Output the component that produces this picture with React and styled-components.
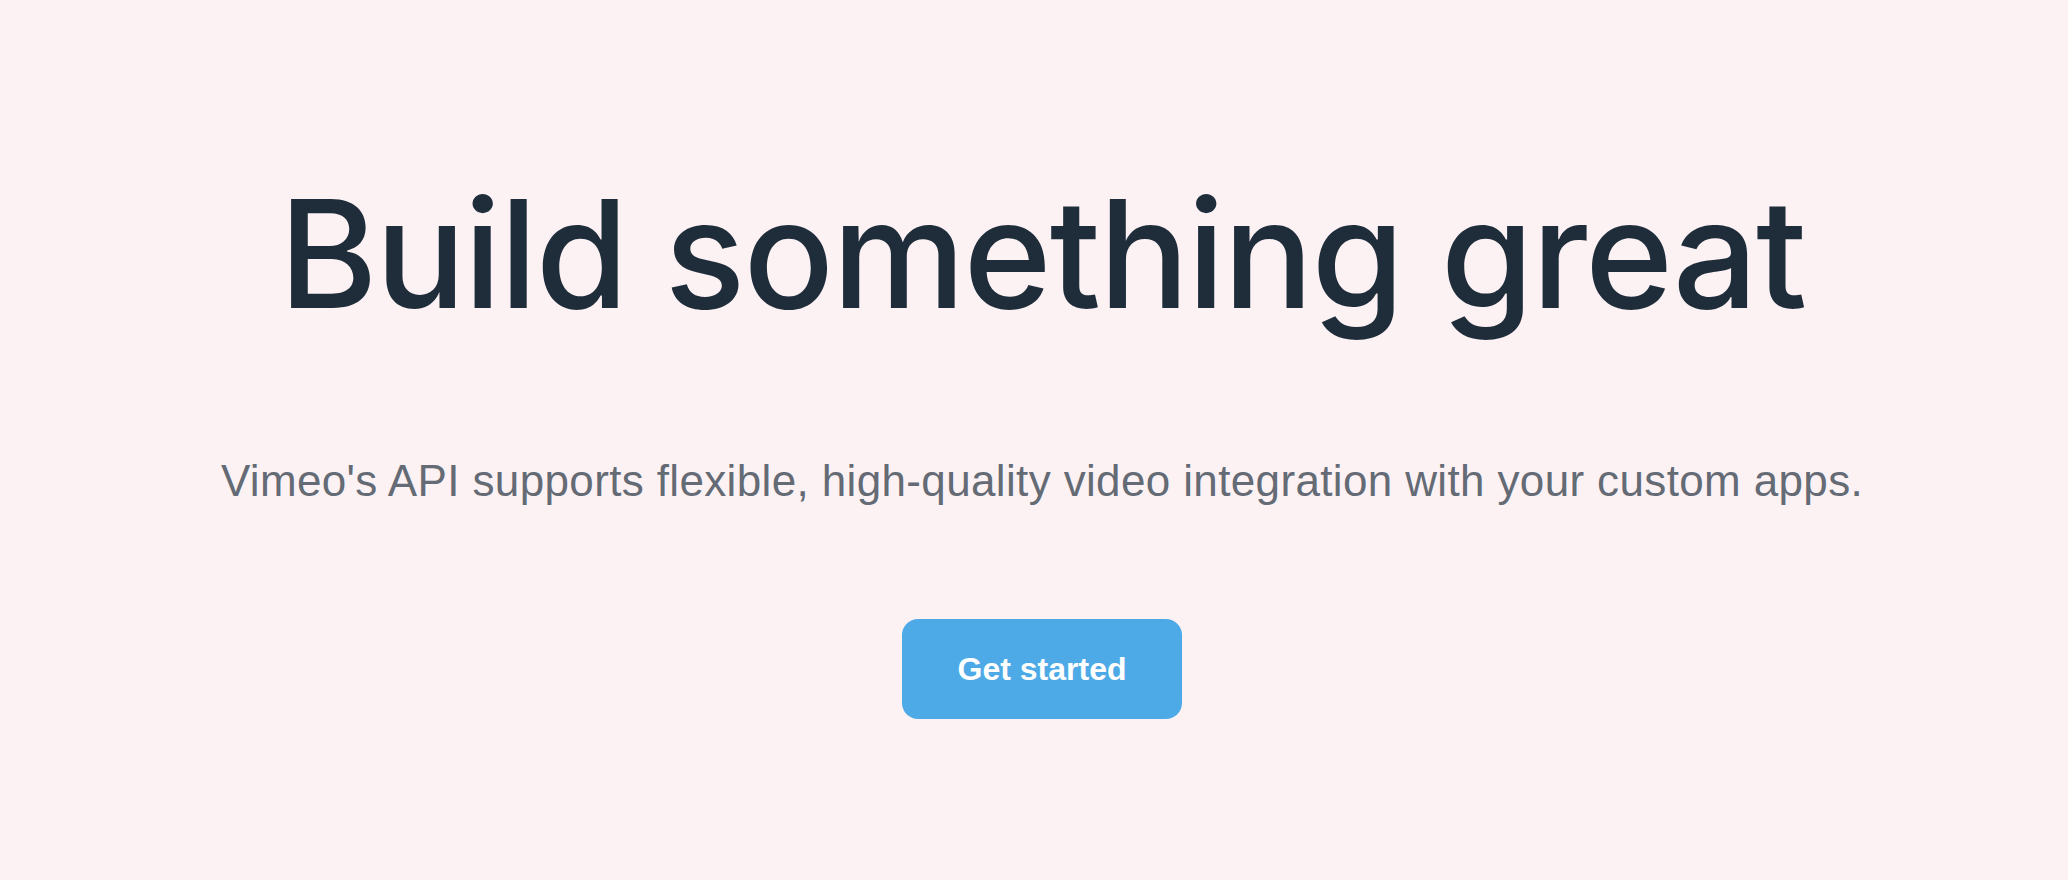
import styled, { createGlobalStyle } from "styled-components";

const GlobalStyle = createGlobalStyle`
  html, body {
    margin: 0;
    background: #fcf2f4;
  }
  body {
    font-family: "Liberation Sans", Arial, sans-serif;
  }
`;

const Hero = styled.section`
  min-height: 880px;
  box-sizing: border-box;
  padding: 0 0 0 16px;
  display: flex;
  flex-direction: column;
  align-items: center;
  background: #fcf2f4;
`;

const Title = styled.h1`
  margin: 174px 0 0;
  font-family: Inter, "Liberation Sans", sans-serif;
  font-size: 150px;
  line-height: 160px;
  font-weight: 500;
  letter-spacing: -1.9px;
  white-space: nowrap;
  color: #1f2d3b;
`;

const Lead = styled.p`
  margin: 121px 0 0;
  font-size: 44px;
  line-height: 52px;
  letter-spacing: 0.36px;
  white-space: nowrap;
  color: #646b75;
`;

const CTA = styled.button`
  margin-top: 112px;
  width: 280px;
  height: 100px;
  border: 0;
  border-radius: 16px;
  background: #4eaae6;
  color: #fff;
  font-family: inherit;
  font-size: 32px;
  font-weight: 700;
  cursor: pointer;
`;

export default function App() {
  return (
    <>
      <GlobalStyle />
      <Hero>
        <Title>Build something great</Title>
        <Lead>
          Vimeo's API supports flexible, high-quality video integration with
          your custom apps.
        </Lead>
        <CTA>Get started</CTA>
      </Hero>
    </>
  );
}
